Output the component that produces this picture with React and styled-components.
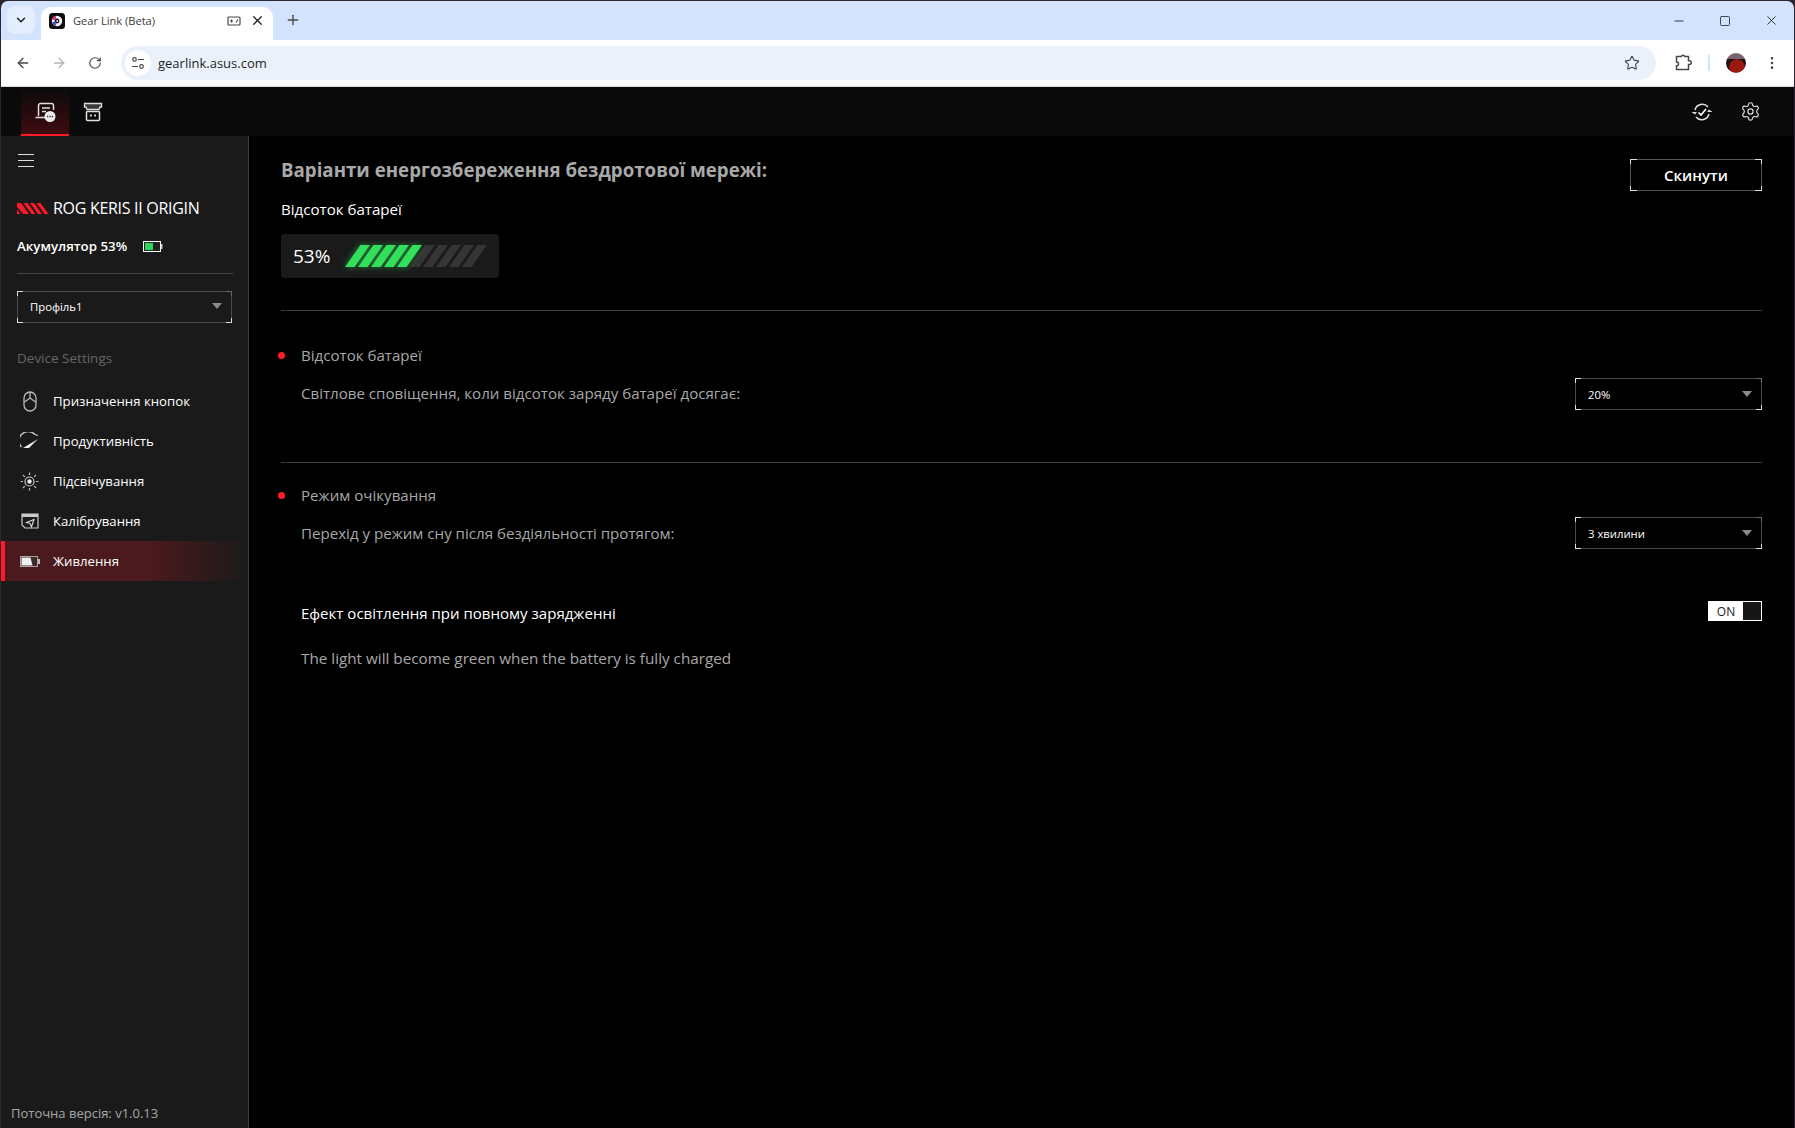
import React from 'react';
import styled, { createGlobalStyle } from 'styled-components';
import { ArrowLeft, ArrowRight, RotateCw, Star, EllipsisVertical, Plus, X, ChevronDown, Minus, Square, Settings } from 'lucide-react';

const GlobalStyle = createGlobalStyle`
  html, body { margin: 0; padding: 0; background: #2a2530; }
  body { font-family: "Open Sans", "Noto Sans", "Liberation Sans", sans-serif; }
  * { box-sizing: border-box; }
`;

const Window = styled.div`
  width: 1795px;
  height: 1128px;
  display: flex;
  flex-direction: column;
  overflow: hidden;
  border-radius: 8px 8px 0 0;
  border-top: 1px solid #2a2a2e;
  border-left: 1px solid #2a2530;
  border-right: 1px solid #2a2530;
`;

const TabStrip = styled.div`
  height: 39px;
  flex: none;
  background: #d3e3fd;
  display: flex;
  align-items: flex-end;
  padding-left: 6px;
  color: #1f1f1f;
`;

const TabSearch = styled.div`
  width: 28px;
  height: 28px;
  margin-bottom: 6px;
  border-radius: 8px;
  background: #e4edfd;
  display: flex;
  align-items: center;
  justify-content: center;
`;

const Tab = styled.div`
  width: 232px;
  height: 33px;
  margin-left: 6px;
  background: #fff;
  border-radius: 10px 10px 0 0;
  display: flex;
  align-items: center;
  gap: 9px;
  padding: 0 8px 6px 8px;
  font-size: 11.1px;
`;

const TabTitle = styled.span`
  flex: 1;
  margin-left: -1px;
  color: #3c3c3c;
  white-space: nowrap;
`;

const NewTab = styled.div`
  margin: 0 0 7px 12px;
  height: 26px;
  display: flex;
  align-items: center;
  color: #474747;
`;

const WindowControls = styled.div`
  margin-left: auto;
  height: 39px;
  display: flex;
  align-items: center;
`;

const WindowButton = styled.div`
  width: 46px;
  height: 39px;
  display: flex;
  align-items: center;
  justify-content: center;
  color: #1f1f1f;
`;

const Toolbar = styled.div`
  height: 47px;
  flex: none;
  background: #fff;
  border-bottom: 1px solid #d9d9d9;
  display: flex;
  align-items: center;
  padding: 0 9px 1px 4px;
  color: #474747;
`;

const NavButton = styled.div`
  width: ${({ $width }) => $width || '36px'};
  height: 34px;
  flex: none;
  margin-left: ${({ $left }) => $left || 0};
  display: flex;
  align-items: center;
  justify-content: center;
  color: ${({ $muted }) => ($muted ? '#b4b4b4' : '#474747')};
`;

const AddressBar = styled.div`
  flex: 1;
  height: 34px;
  margin-left: 8px;
  padding: 0 16px 0 4px;
  border-radius: 17px;
  background: #ebf1fb;
  display: flex;
  align-items: center;
`;

const SiteInfo = styled.div`
  width: 26px;
  height: 26px;
  border-radius: 50%;
  background: #fff;
  display: flex;
  align-items: center;
  justify-content: center;
`;

const Url = styled.span`
  margin-left: 7px;
  flex: 1;
  font-size: 13px;
  color: #1f1f1f;
`;

const ToolbarSeparator = styled.div`
  width: 2px;
  height: 16px;
  flex: none;
  margin: 0 16px 0 7px;
  background: #d3e3fd;
`;

const Avatar = styled.div`
  width: 20px;
  height: 20px;
  flex: none;
  border-radius: 50%;
  background: radial-gradient(circle at 55% 70%, #9a1a12 0 42%, transparent 44%),
    linear-gradient(#7a6470 0 32%, #2a1214 32% 100%);
`;

const AppHeader = styled.div`
  height: 49px;
  flex: none;
  background: #0a0a0a;
  display: flex;
  align-items: stretch;
  padding: 0 20px 0 20px;
  color: #e0e0e0;
`;

const HeaderTab = styled.div`
  width: 48px;
  padding-top: 2px;
  display: flex;
  align-items: center;
  justify-content: center;
  border-bottom: 2px solid ${({ $active }) => ($active ? '#ff1929' : 'transparent')};
  background: ${({ $active }) => ($active ? 'linear-gradient(#0a0a0a, #3f0b10)' : 'transparent')};
`;

const HeaderEnd = styled.div`
  margin-left: auto;
  display: flex;
`;

const Body = styled.div`
  flex: 1;
  min-height: 0;
  display: flex;
`;

const Sidebar = styled.aside`
  width: 248px;
  flex: none;
  background: #1a1a1a;
  border-right: 1px solid #3a3a3a;
  display: flex;
  flex-direction: column;
  color: #fff;
`;

const MenuButton = styled.div`
  margin: 18px 0 0 17px;
  width: 16px;
  height: 13px;
  border-top: 1.5px solid #ddd;
  border-bottom: 1.5px solid #ddd;
  display: flex;
  align-items: center;
  &::before {
    content: '';
    width: 100%;
    height: 1.5px;
    background: #ddd;
  }
`;

const DeviceRow = styled.div`
  margin: 29px 0 0 16px;
  height: 24px;
  display: flex;
  align-items: center;
  gap: 4px;
`;

const DeviceName = styled.span`
  font-size: 16px;
  letter-spacing: -0.3px;
  white-space: nowrap;
`;

const BatteryRow = styled.div`
  margin: 14px 0 0 16px;
  height: 24px;
  display: flex;
  align-items: center;
  gap: 16px;
  font-size: 13.3px;
  font-weight: 600;
  white-space: nowrap;
`;

const SidebarRule = styled.div`
  height: 1px;
  margin: 15px 15px 0 16px;
  background: #444;
`;

const Corner = styled.span`
  position: absolute;
  width: ${({ $size }) => $size || 6}px;
  height: 5px;
  ${({ $v }) => $v}: -1px;
  ${({ $h }) => $h}: -1px;
  border-${({ $v }) => $v}: 1px solid ${({ $color }) => $color || '#ddd'};
  border-${({ $h }) => $h}: 1px solid ${({ $color }) => $color || '#ddd'};
`;

const Select = styled.div`
  position: relative;
  height: 32px;
  flex: none;
  border: 1px solid #4a4a4a;
  display: flex;
  align-items: center;
  justify-content: space-between;
  padding: 0 9px ${({ $raised }) => ($raised ? '2px' : '0')} 12px;
  font-size: 11.3px;
  color: #fff;
  width: ${({ $width }) => $width};
  margin: ${({ $margin }) => $margin || 0};
`;

const Caret = styled.span`
  width: 0;
  height: 0;
  border-left: 5px solid transparent;
  border-right: 5px solid transparent;
  border-top: 6px solid #8a8a8a;
`;

const SectionLabel = styled.div`
  margin: 25px 0 0 16px;
  height: 20px;
  line-height: 20px;
  font-size: 13.5px;
  color: #666;
`;

const NavList = styled.div`
  margin-top: 13px;
  display: flex;
  flex-direction: column;
`;

const NavItem = styled.div`
  height: 40px;
  display: flex;
  align-items: center;
  padding-left: ${({ $active }) => ($active ? '14px' : '18px')};
  gap: 13px;
  font-size: 13.2px;
  color: #fff;
  border-left: ${({ $active }) => ($active ? '4px solid #ff1929' : '0')};
  background: ${({ $active }) => ($active ? 'linear-gradient(90deg, #4a1a1e 0 60%, #1a1a1a 100%)' : 'transparent')};
`;

const NavIcon = styled.span`
  width: 21px;
  display: flex;
  justify-content: center;
`;

const Version = styled.div`
  margin: auto 0 0 10px;
  height: 24px;
  font-size: 13px;
  color: #a8a8a8;
  white-space: nowrap;
`;

const Main = styled.main`
  flex: 1;
  min-width: 0;
  background: #000;
  padding: 20px 32px 0 32px;
  color: #fff;
`;

const TitleRow = styled.div`
  display: flex;
  justify-content: space-between;
  align-items: flex-start;
`;

const Title = styled.h1`
  margin: 0;
  font-size: 18.7px;
  line-height: 28px;
  font-weight: 700;
  color: #a9a9a9;
`;

const ResetButton = styled.div`
  position: relative;
  width: 132px;
  height: 32px;
  margin-top: 3px;
  border: 1px solid #555;
  display: flex;
  align-items: center;
  justify-content: center;
  font-size: 15px;
  font-weight: 600;
  color: #fff;
`;

const BatteryCaption = styled.div`
  margin-top: 8px;
  font-size: 15.1px;
  line-height: 20px;
  color: #fff;
`;

const BatteryPanel = styled.div`
  margin-top: 15px;
  width: 218px;
  height: 44px;
  border-radius: 4px;
  background: #1a1a1a;
  display: flex;
  align-items: center;
  padding-left: 12px;
  gap: 15px;
  font-size: 19px;
  color: #fff;
`;

const Rule = styled.div`
  height: 1px;
  background: #3c3c3c;
  margin-top: ${({ $top }) => $top};
`;

const Section = styled.section`
  padding-top: ${({ $top }) => $top};
`;

const SectionHead = styled.div`
  display: flex;
  align-items: center;
  height: 20px;
  gap: 16px;
  font-size: 15.1px;
  color: #a8a8a8;
`;

const Dot = styled.span`
  width: 7px;
  height: 7px;
  flex: none;
  margin-left: -3px;
  border-radius: 50%;
  background: #ff1929;
`;

const SettingRow = styled.div`
  display: flex;
  align-items: center;
  justify-content: space-between;
  margin: ${({ $top }) => $top} 0 0 20px;
  min-height: ${({ $height }) => $height};
`;

const SettingText = styled.span`
  font-size: ${({ $size }) => $size || '15.1px'};
  color: ${({ $strong }) => ($strong ? '#fff' : '#a8a8a8')};
  font-weight: ${({ $strong }) => ($strong ? 500 : 400)};
`;

const Toggle = styled.div`
  width: 54px;
  height: 20px;
  margin-top: -4px;
  border: 1px solid #fff;
  display: flex;
  font-size: 12px;
  color: #222;
`;

const ToggleLabel = styled.span`
  flex: 1;
  background: #fff;
  display: flex;
  align-items: center;
  justify-content: center;
`;

const ToggleKnob = styled.span`
  width: 18px;
  background: #161616;
`;

const Stroke = { fill: 'none', stroke: 'currentColor', strokeWidth: 1.5 };

const Favicon = () => (
  <svg width="16" height="16" viewBox="0 0 16 16">
    <rect width="16" height="16" rx="3.5" fill="#0d0d0d" />
    <circle cx="8" cy="8" r="5.2" fill="#f4f4f4" />
    <circle cx="8" cy="8" r="2.4" fill="#0d0d0d" />
    <circle cx="8.3" cy="8" r="1" fill="#f4f4f4" />
    <path d="M3 6.5 A5.2 5.2 0 0 1 7 3 L7 7 Z" fill="#e0218a" />
    <path d="M3 9.5 A5.2 5.2 0 0 0 7 13 L6.5 8.5 Z" fill="#2b48d6" />
  </svg>
);

const TabBadge = () => (
  <svg width="14" height="12" viewBox="0 0 14 12" fill="none" stroke="#474747" strokeWidth="1.2">
    <rect x="1" y="2" width="12" height="8" rx="1" />
    <path d="M3 6h3M4.5 4.5v3M9 7.5l2-3" />
  </svg>
);

const SiteControls = () => (
  <svg width="14" height="14" viewBox="0 0 14 14" fill="none" stroke="#474747" strokeWidth="1.2">
    <circle cx="3.5" cy="3.5" r="1.8" />
    <path d="M7 3.5h6M1 10.5h6" />
    <circle cx="10.5" cy="10.5" r="1.8" />
  </svg>
);

const ExtensionIcon = () => (
  <svg width="18" height="18" viewBox="0 0 18 18" fill="none" stroke="#474747" strokeWidth="1.5">
    <path d="M2.5 2.5h4.8a1.8 1.8 0 0 1 3.4 0h3.8v4.3h1a1.8 1.8 0 0 1 0 3.6h-1v5.1H2.5v-3.5a2 2 0 0 0 0-4Z" />
  </svg>
);

const SupportIcon = () => (
  <svg width="21" height="20" viewBox="0 0 21 20">
    <path {...Stroke} d="M3.5 14V3.5A2 2 0 0 1 5.5 1.5h11a2 2 0 0 1 2 2V8M0.5 15.5h10M7 6h8M7 9.5h4" />
    <circle cx="15" cy="14.5" r="5.5" fill="#ececec" />
    <path d="M12 14.5h1.3M14.4 14.5h1.3M16.8 14.5h1.3" stroke="#333" strokeWidth="1.5" />
  </svg>
);

const StoreIcon = () => (
  <svg width="20" height="20" viewBox="0 0 20 20">
    <path d="M1.5 1.5h17v3.5h-1.5l-1 2.5h-12l-1-2.5H1.5Z" fill="#3a3a3a" stroke="#ddd" strokeWidth="1.3" />
    <rect {...Stroke} x="3.5" y="9.5" width="13" height="9" rx="1" />
    <path d="M7 13.5h1.8M11.2 13.5H13" stroke="#ddd" strokeWidth="1.8" />
  </svg>
);

const SyncCheckIcon = () => (
  <svg width="22" height="20" viewBox="0 0 22 20">
    <path {...Stroke} d="M4 8A7.5 7.5 0 0 1 17 5M18 12A7.5 7.5 0 0 1 5 15" />
    <path d="M7.5 10.5l2.5 2.5 5-6" fill="none" stroke="#fff" strokeWidth="1.7" />
    <path d="M0.5 10l3.5 2.5 2-2.5ZM21.5 10l-3.5-2.5-2 2.5Z" fill="#ddd" />
  </svg>
);

const RogStripes = () => (
  <svg width="32" height="11" viewBox="0 0 32 11">
    <path d="M0 0h4l8 11H6.5L0 4ZM6.5 0h4l8 11h-4ZM13 0h4l8 11h-4ZM19.5 0h4l8 11h-4Z" fill="#ff1929" />
    <path d="M0 6.5l3.5 4.5H0Z" fill="#ff1929" />
  </svg>
);

const SmallBattery = () => (
  <svg width="20" height="11" viewBox="0 0 20 11">
    <rect x="0.5" y="0.5" width="17" height="10" fill="#222" stroke="#fff" />
    <rect x="2" y="2" width="8" height="7" fill="#2fd45a" />
    <rect x="18" y="3" width="1.5" height="5" fill="#ccc" />
  </svg>
);

const MouseIcon = () => (
  <svg width="16" height="21" viewBox="0 0 16 21">
    <rect x="2" y="1" width="12" height="19" rx="6" fill="none" stroke="#bbb" strokeWidth="1.3" />
    <path d="M8 1v6M2.5 11L8 7l5.5 4" fill="none" stroke="#bbb" strokeWidth="1.3" />
  </svg>
);

const GaugeIcon = () => (
  <svg width="20" height="18" viewBox="0 0 20 18">
    <path d="M1.5 15A8.5 8.5 0 0 1 15 2.5l3 1" fill="none" stroke="#ccc" strokeWidth="1.3" />
    <path d="M3 16l15-9-9 9Z" fill="#eee" />
  </svg>
);

const LightIcon = () => (
  <svg width="19" height="19" viewBox="0 0 19 19">
    <circle cx="9.5" cy="9.5" r="4.5" fill="none" stroke="#ccc" strokeWidth="1.2" />
    <circle cx="9.5" cy="9.5" r="2.2" fill="#eee" />
    <path d="M9.5 0.5v2.5M9.5 16v2.5M0.5 9.5H3M16 9.5h2.5M3 3l1.8 1.8M14.2 14.2L16 16M16 3l-1.8 1.8M4.8 14.2L3 16" stroke="#bbb" strokeWidth="1.2" />
  </svg>
);

const CalibrateIcon = () => (
  <svg width="18" height="17" viewBox="0 0 18 17">
    <path d="M1 1h16v14H4l-3-3Z" fill="none" stroke="#ccc" strokeWidth="1.2" />
    <rect x="1" y="1" width="16" height="3" fill="#ccc" />
    <path d="M5.5 9.5l7.5-3-2.5 7.5-1.5-3.5Z" fill="none" stroke="#ddd" strokeWidth="1.1" />
  </svg>
);

const PowerIcon = () => (
  <svg width="20" height="11" viewBox="0 0 20 11">
    <rect x="0.5" y="0.5" width="17" height="10" fill="#3a2a2a" stroke="#b0a0a0" />
    <path d="M1.5 1.5h9l2 8h-11Z" fill="#eee" />
    <rect x="18" y="3" width="2" height="5" fill="#bbb" />
  </svg>
);

const stripePoints = (i) => `${i * 13},29 ${i * 13 + 9.5},29 ${i * 13 + 25},7 ${i * 13 + 15.5},7`;

const BatteryStripes = ({ total = 10, filled = 5 }) => {
  const stripes = Array.from({ length: total }, (_, i) => i);
  const green = stripes.filter((i) => i < filled);
  return (
    <svg width="160" height="36" viewBox="0 0 160 36" style={{ overflow: 'visible' }}>
      <defs>
        <filter id="glow" x="-30%" y="-50%" width="160%" height="200%">
          <feGaussianBlur stdDeviation="3" />
        </filter>
      </defs>
      {stripes.filter((i) => i >= filled).map((i) => (
        <polygon key={i} points={stripePoints(i)} fill="#353535" />
      ))}
      <g filter="url(#glow)" opacity="0.55">
        {green.map((i) => <polygon key={i} points={stripePoints(i)} fill="#2fe05a" />)}
      </g>
      {green.map((i) => <polygon key={i} points={stripePoints(i)} fill="#33e05c" />)}
    </svg>
  );
};

const navItems = [
  { label: 'Призначення кнопок', icon: <MouseIcon /> },
  { label: 'Продуктивність', icon: <GaugeIcon /> },
  { label: 'Підсвічування', icon: <LightIcon /> },
  { label: 'Калібрування', icon: <CalibrateIcon /> },
  { label: 'Живлення', icon: <PowerIcon />, active: true },
];

const Dropdown = ({ value, width, margin, raised }) => (
  <Select $width={width} $margin={margin} $raised={raised}>
    {value}
    <Caret />
    <Corner $v="top" $h="left" />
    <Corner $v="bottom" $h="left" />
    <Corner $v="bottom" $h="right" />
    <Corner $v="top" $h="right" $color="#666" />
  </Select>
);

const App = () => (
  <>
    <GlobalStyle />
    <Window>
      <TabStrip>
        <TabSearch><ChevronDown size={14} strokeWidth={2.5} /></TabSearch>
        <Tab>
          <Favicon />
          <TabTitle>Gear Link (Beta)</TabTitle>
          <TabBadge />
          <X size={15} strokeWidth={2} />
        </Tab>
        <NewTab><Plus size={16} strokeWidth={2} /></NewTab>
        <WindowControls>
          <WindowButton><Minus size={14} strokeWidth={1.5} /></WindowButton>
          <WindowButton><Square size={12} strokeWidth={1.6} /></WindowButton>
          <WindowButton><X size={15} strokeWidth={1.4} /></WindowButton>
        </WindowControls>
      </TabStrip>
      <Toolbar>
        <NavButton><ArrowLeft size={16} /></NavButton>
        <NavButton $muted><ArrowRight size={16} /></NavButton>
        <NavButton><RotateCw size={14} /></NavButton>
        <AddressBar>
          <SiteInfo><SiteControls /></SiteInfo>
          <Url>gearlink.asus.com</Url>
          <Star size={16} strokeWidth={1.7} />
        </AddressBar>
        <NavButton $left="9px"><ExtensionIcon /></NavButton>
        <ToolbarSeparator />
        <Avatar />
        <NavButton $left="13px" $width="26px"><EllipsisVertical size={16} /></NavButton>
      </Toolbar>
      <AppHeader>
        <HeaderTab $active><SupportIcon /></HeaderTab>
        <HeaderTab><StoreIcon /></HeaderTab>
        <HeaderEnd>
          <HeaderTab><SyncCheckIcon /></HeaderTab>
          <HeaderTab><Settings size={21} strokeWidth={1.3} /></HeaderTab>
        </HeaderEnd>
      </AppHeader>
      <Body>
        <Sidebar>
          <MenuButton />
          <DeviceRow><RogStripes /><DeviceName>ROG KERIS II ORIGIN</DeviceName></DeviceRow>
          <BatteryRow>Акумулятор 53%<SmallBattery /></BatteryRow>
          <SidebarRule />
          <Dropdown value="Профіль1" width="215px" margin="17px 0 0 16px" raised />
          <SectionLabel>Device Settings</SectionLabel>
          <NavList>
            {navItems.map((item) => (
              <NavItem key={item.label} $active={item.active}>
                <NavIcon>{item.icon}</NavIcon>
                {item.label}
              </NavItem>
            ))}
          </NavList>
          <Version>Поточна версія: v1.0.13</Version>
        </Sidebar>
        <Main>
          <TitleRow>
            <Title>Варіанти енергозбереження бездротової мережі:</Title>
            <ResetButton>
              Скинути
              <Corner $v="top" $h="left" $size={7} />
              <Corner $v="top" $h="right" $size={7} />
              <Corner $v="bottom" $h="left" $size={7} />
              <Corner $v="bottom" $h="right" $size={7} />
            </ResetButton>
          </TitleRow>
          <BatteryCaption>Відсоток батареї</BatteryCaption>
          <BatteryPanel>
            53%
            <BatteryStripes />
          </BatteryPanel>
          <Rule $top="32px" />
          <Section $top="34px">
            <SectionHead><Dot />Відсоток батареї</SectionHead>
            <SettingRow $top="11px" $height="34px">
              <SettingText>Світлове сповіщення, коли відсоток заряду батареї досягає:</SettingText>
              <Dropdown value="20%" width="187px" margin="2px 0 0 0" />
            </SettingRow>
          </Section>
          <Rule $top="52px" />
          <Section $top="22px">
            <SectionHead><Dot />Режим очікування</SectionHead>
            <SettingRow $top="12px" $height="32px">
              <SettingText>Перехід у режим сну після бездіяльності протягом:</SettingText>
              <Dropdown value="3 хвилини" width="187px" />
            </SettingRow>
            <SettingRow $top="53px" $height="22px">
              <SettingText $strong $size="15.05px">Ефект освітлення при повному зарядженні</SettingText>
              <Toggle><ToggleLabel>ON</ToggleLabel><ToggleKnob /></Toggle>
            </SettingRow>
            <SettingRow $top="23px" $height="22px">
              <SettingText $size="15.25px">The light will become green when the battery is fully charged</SettingText>
            </SettingRow>
          </Section>
        </Main>
      </Body>
    </Window>
  </>
);

export default App;
